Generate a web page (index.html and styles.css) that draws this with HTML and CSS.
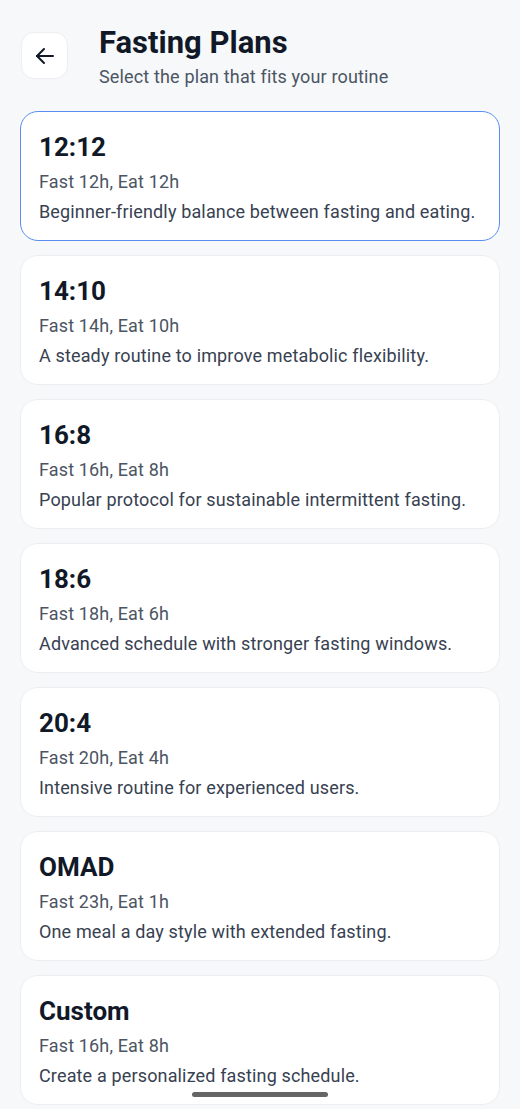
FILE: index.html
```html
<!DOCTYPE html>
<html lang="en">
<head>
<meta charset="utf-8">
<title>Fasting Plans</title>
<link rel="stylesheet" href="styles.css">
</head>
<body>
<div class="screen">
  <header class="header">
    <button class="back" aria-label="Back">
      <svg width="24" height="24" viewBox="0 0 24 24" fill="none" stroke="#111827" stroke-width="2" stroke-linecap="round" stroke-linejoin="round"><path d="M20 12H4"/><path d="M11 19l-7-7 7-7"/></svg>
    </button>
    <div class="titles">
      <h1 class="title">Fasting Plans</h1>
      <p class="subtitle">Select the plan that fits your routine</p>
    </div>
  </header>
  <main class="plans">
    <div class="card selected">
      <div class="name">12:12</div>
      <div class="split">Fast 12h, Eat 12h</div>
      <div class="desc">Beginner-friendly balance between fasting and eating.</div>
    </div>
    <div class="card">
      <div class="name">14:10</div>
      <div class="split">Fast 14h, Eat 10h</div>
      <div class="desc">A steady routine to improve metabolic flexibility.</div>
    </div>
    <div class="card">
      <div class="name">16:8</div>
      <div class="split">Fast 16h, Eat 8h</div>
      <div class="desc">Popular protocol for sustainable intermittent fasting.</div>
    </div>
    <div class="card">
      <div class="name">18:6</div>
      <div class="split">Fast 18h, Eat 6h</div>
      <div class="desc">Advanced schedule with stronger fasting windows.</div>
    </div>
    <div class="card">
      <div class="name">20:4</div>
      <div class="split">Fast 20h, Eat 4h</div>
      <div class="desc">Intensive routine for experienced users.</div>
    </div>
    <div class="card">
      <div class="name">OMAD</div>
      <div class="split">Fast 23h, Eat 1h</div>
      <div class="desc">One meal a day style with extended fasting.</div>
    </div>
    <div class="card">
      <div class="name">Custom</div>
      <div class="split">Fast 16h, Eat 8h</div>
      <div class="desc">Create a personalized fasting schedule.</div>
    </div>
  </main>
  <div class="home-indicator"></div>
</div>
</body>
</html>
```
FILE: styles.css
```css
* { box-sizing: border-box; }
html, body {
  margin: 0;
  padding: 0;
  background: #f7f8fa;
  font-family: Roboto, "Noto Sans", Arial, sans-serif;
  color: #111827;
}
.screen {
  position: relative;
  width: 520px;
  height: 1109px;
  overflow: hidden;
  padding: 26px 20px 0 20px;
}
.header {
  display: flex;
  align-items: flex-start;
  gap: 31px;
  padding-left: 1px;
}
.back {
  margin-top: 6px;
  width: 47px;
  height: 47px;
  flex: none;
  border-radius: 13px;
  border: 1px solid #eceef1;
  background: #ffffff;
  display: flex;
  align-items: center;
  justify-content: center;
  padding: 0;
}
.titles { display: flex; flex-direction: column; }
.title {
  margin: 0;
  font-size: 31px;
  line-height: 34px;
  font-weight: 700;
  color: #111827;
}
.subtitle {
  margin: 5px 0 0 0;
  font-size: 18px;
  line-height: 24px;
  letter-spacing: 0.15px;
  color: #4b5563;
}
.plans {
  margin-top: 22px;
  display: flex;
  flex-direction: column;
  gap: 14px;
}
.card {
  height: 130px;
  background: #ffffff;
  border: 1px solid #eceef1;
  border-radius: 18px;
  padding: 19px 18px 16px 18px;
}
.card.selected { border-color: #5b8ef0; }
.name {
  font-size: 26px;
  line-height: 32px;
  font-weight: 700;
  color: #111827;
  margin-bottom: 7px;
}
.split {
  font-size: 18px;
  line-height: 24px;
  letter-spacing: 0.15px;
  color: #4b5563;
  margin-bottom: 6px;
}
.desc {
  font-size: 18px;
  line-height: 24px;
  letter-spacing: 0.15px;
  color: #374151;
}
.home-indicator {
  position: absolute;
  left: 192px;
  top: 1092px;
  width: 136px;
  height: 5px;
  border-radius: 3px;
  background: #666666;
}
```
